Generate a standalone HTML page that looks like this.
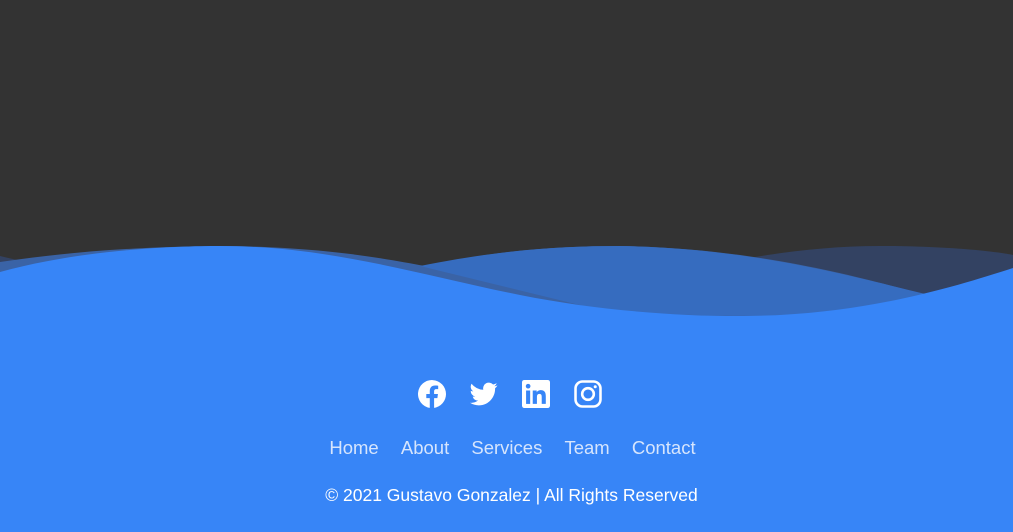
<!DOCTYPE html>
<html><head><style>
html,body{margin:0;padding:0;width:1013px;height:532px;overflow:hidden;background:#333333;font-family:"Liberation Sans",Arial,sans-serif;}
svg.w{position:absolute;left:0;top:0}
.icons{position:absolute;top:380px;left:0;width:1013px;}
.icons svg{position:absolute;top:0}
.nav{position:absolute;top:437px;left:6px;width:1013px;text-align:center;font-size:18.5px;color:#d6e5fd;}
.nav span{margin:0 8.5px}
.copy{position:absolute;top:485px;left:5px;width:1013px;text-align:center;font-size:17.5px;color:#fff;}
</style></head><body>
<svg class="w" width="1013" height="532" viewBox="0 0 1013 532">
<path d="M0,256 C100,280 300,320 500,300 C650,285 750,246 880,246 C950,246 1000,252 1013,255 L1013,532 L0,532Z" fill="#334262"/>
<path d="M0,262 C80,250 160,246 230,246 C330,248 380,258 425,266 C500,250 560,246 620,246 C760,248 870,280 930,296 L930,532 L0,532Z" fill="#3a63a6"/>
<path d="M420,266 C500,250 560,246 620,246 C760,248 870,282 935,296 C880,315 760,322 600,310 Z" fill="#366cbf"/>
<path d="M0,272 C80,250 170,246 220,246 C330,246 420,275 520,295 C620,315 720,318 780,315 C880,310 960,285 1013,268 L1013,532 L0,532Z" fill="#3785f7"/>
</svg>
<div class="icons">
<svg style="left:418px" width="28" height="28" viewBox="0 0 24 24"><path fill="#fff" d="M24 12a12 12 0 1 0-13.9 11.9v-8.4H7.1V12h3V9.4c0-3 1.8-4.7 4.5-4.7 1.3 0 2.7.2 2.7.2v2.9h-1.5c-1.5 0-2 .9-2 1.9V12h3.3l-.5 3.5h-2.8v8.4A12 12 0 0 0 24 12z"/></svg>
<svg style="left:469px" width="30" height="28" viewBox="0 0 24 24"><path fill="#fff" d="M23.6 4.6a9.7 9.7 0 0 1-2.8.8 4.9 4.9 0 0 0 2.1-2.7 9.8 9.8 0 0 1-3.1 1.2 4.9 4.9 0 0 0-8.4 4.5A14 14 0 0 1 1.300 3.2a4.9 4.9 0 0 0 1.5 6.6 4.9 4.9 0 0 1-2.2-.6v.1a4.9 4.9 0 0 0 3.9 4.8 4.9 4.9 0 0 1-2.2.1 4.9 4.9 0 0 0 4.6 3.4A9.900 9.900 0 0 1 0 19.5a14 14 0 0 0 7.5 2.2c9 0 14-7.5 14-14v-.6a10 10 0 0 0 2.1-2.5z"/></svg>
<svg style="left:522px" width="28" height="28" viewBox="0 0 24 24"><rect width="24" height="24" rx="2" fill="#fff"/><rect x="3.5" y="9" width="3.5" height="11.5" fill="#3785f7"/><circle cx="5.25" cy="5.3" r="2" fill="#3785f7"/><path fill="#3785f7" d="M9.2 9h3.4v1.6c.5-.9 1.7-1.9 3.5-1.9 3.6 0 4.3 2.4 4.3 5.5v6.3h-3.5v-5.6c0-1.3 0-3-1.9-3s-2.2 1.4-2.2 2.9v5.7H9.2z"/></svg>
<svg style="left:574px" width="28" height="28" viewBox="0 0 24 24"><rect x="1.3" y="1.3" width="21.4" height="21.4" rx="6" fill="none" stroke="#fff" stroke-width="2.2"/><circle cx="12" cy="12" r="5" fill="none" stroke="#fff" stroke-width="2.2"/><circle cx="18.2" cy="5.8" r="1.3" fill="#fff"/></svg>
</div>
<div class="nav"><span>Home</span> <span>About</span> <span>Services</span> <span>Team</span> <span>Contact</span></div>
<div class="copy">© 2021 Gustavo Gonzalez | All Rights Reserved</div>
</body></html>
